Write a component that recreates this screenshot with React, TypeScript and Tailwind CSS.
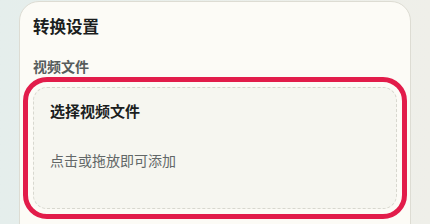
export default function App() {
  return (
    <div
      className="h-[224px] w-[430px] overflow-hidden bg-gradient-to-r from-[#e5eeec] to-[#efefe9] pt-[1px] pl-[19px]"
      style={{ fontFamily: '"Noto Sans CJK SC", "Noto Sans", sans-serif' }}
    >
      <div className="h-[240px] w-[392px] rounded-t-[20px] border border-[#dddcd3] bg-[#fcfbf6] px-[13px] pt-[12px]">
        <h2 className="text-[16.5px] font-bold leading-[24px] text-[#1b1e1e]">转换设置</h2>
        <div className="mt-[18px] text-[14px] font-bold leading-[20px] text-[#565c5c]">视频文件</div>
        <div className="mt-[11px] h-[122px] rounded-[14px] border border-dashed border-[#d8d8cf] bg-[#f6f6f0] px-[16px] pt-[12px] outline-[5px] outline-offset-[5px] outline-[#e21c4a] outline-solid">
          <div className="text-[15px] font-bold leading-[22px] text-[#1b1e1e]">选择视频文件</div>
          <div className="mt-[28px] text-[14px] leading-[20px] text-[#626767]">点击或拖放即可添加</div>
        </div>
      </div>
    </div>
  );
}
